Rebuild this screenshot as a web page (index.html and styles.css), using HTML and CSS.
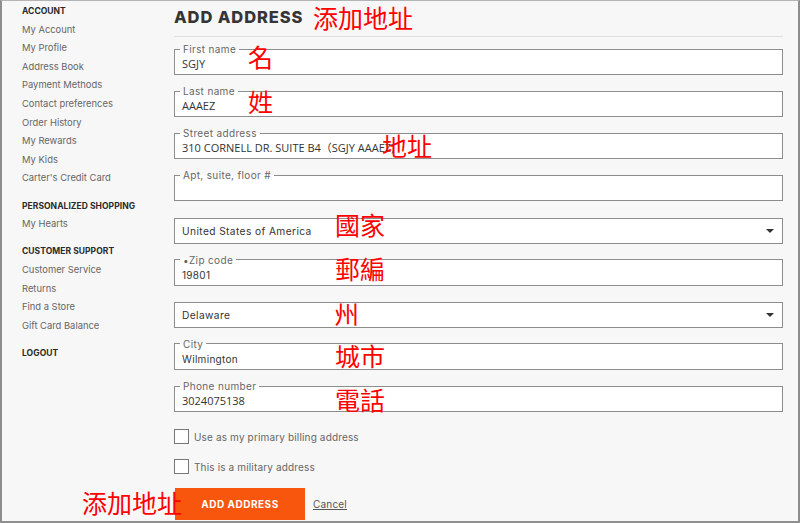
FILE: index.html
```html
<!DOCTYPE html>
<html lang="en">
<head>
<meta charset="utf-8">
<title>Add Address</title>
<link rel="stylesheet" href="styles.css">
</head>
<body>
<div class="frame">
  <aside class="sidebar">
    <nav class="nav-group">
      <h3 class="nav-title">ACCOUNT</h3>
      <a class="nav-link">My Account</a>
      <a class="nav-link">My Profile</a>
      <a class="nav-link">Address Book</a>
      <a class="nav-link">Payment Methods</a>
      <a class="nav-link">Contact preferences</a>
      <a class="nav-link">Order History</a>
      <a class="nav-link">My Rewards</a>
      <a class="nav-link">My Kids</a>
      <a class="nav-link">Carter's Credit Card</a>
    </nav>
    <nav class="nav-group">
      <h3 class="nav-title">PERSONALIZED SHOPPING</h3>
      <a class="nav-link">My Hearts</a>
    </nav>
    <nav class="nav-group">
      <h3 class="nav-title">CUSTOMER SUPPORT</h3>
      <a class="nav-link">Customer Service</a>
      <a class="nav-link">Returns</a>
      <a class="nav-link">Find a Store</a>
      <a class="nav-link">Gift Card Balance</a>
    </nav>
    <nav class="nav-group">
      <h3 class="nav-title">LOGOUT</h3>
    </nav>
  </aside>

  <main class="main">
    <h1 class="title">ADD ADDRESS</h1>
    <form class="form">
      <div class="fields">
        <fieldset class="field"><legend class="field-label">First name</legend><div class="value value-auto">SGJY</div></fieldset>
        <fieldset class="field"><legend class="field-label">Last name</legend><div class="value value-auto">AAAEZ</div></fieldset>
        <fieldset class="field"><legend class="field-label">Street address</legend><div class="value value-auto">310 CORNELL DR. SUITE B4（SGJY AAAEZ)</div></fieldset>
        <fieldset class="field"><legend class="field-label">Apt, suite, floor #</legend><div class="value">&nbsp;</div></fieldset>
        <div class="select-wrap"><div class="select"><span class="select-text">United States of America</span><span class="caret"></span></div></div>
        <fieldset class="field"><legend class="field-label">•Zip code</legend><div class="value">19801</div></fieldset>
        <div class="select-wrap"><div class="select"><span class="select-text">Delaware</span><span class="caret"></span></div></div>
        <fieldset class="field"><legend class="field-label">City</legend><div class="value">Wilmington</div></fieldset>
        <fieldset class="field"><legend class="field-label">Phone number</legend><div class="value value-auto">3024075138</div></fieldset>
      </div>
      <div class="checks">
        <label class="check"><span class="box"></span><span class="check-text">Use as my primary billing address</span></label>
        <label class="check"><span class="box"></span><span class="check-text">This is a military address</span></label>
      </div>
      <div class="actions">
        <button type="button" class="btn-primary">ADD ADDRESS</button>
        <a class="cancel">Cancel</a>
      </div>
    </form>
  </main>

  <span class="note note-title">添加地址</span>
  <span class="note note-first">名</span>
  <span class="note note-last">姓</span>
  <span class="note note-street">地址</span>
  <span class="note note-country">國家</span>
  <span class="note note-zip">郵編</span>
  <span class="note note-state">州</span>
  <span class="note note-city">城市</span>
  <span class="note note-phone">電話</span>
  <span class="note note-submit">添加地址</span>
</div>
</body>
</html>
```

FILE: styles.css
```css
* { box-sizing: border-box; }

html, body {
  margin: 0;
  padding: 0;
}

body {
  width: 800px;
  height: 523px;
  overflow: hidden;
  background: #f7f7f7;
  font-family: "Inter", "Noto Sans", sans-serif;
  color: #333;
}

.frame {
  position: relative;
  display: flex;
  width: 800px;
  height: 523px;
  overflow: hidden;
  background: #f7f7f7;
  border: 2px solid #8e8e8e;
  border-top: 1px solid #b4b4b4;
}

/* Sidebar */
.sidebar {
  flex: none;
  width: 172px;
  padding: 1px 0 0 20px;
}

.nav-group {
  display: flex;
  flex-direction: column;
  margin-top: 8.6px;
}

.nav-group:first-child { margin-top: 0; }

.nav-title {
  margin: 0;
  font-size: 8.5px;
  line-height: 18.6px;
  font-weight: 700;
  color: #2a2a2a;
  letter-spacing: 0.05px;
}

.nav-link {
  font-size: 9.4px;
  line-height: 18.6px;
  color: #666;
  text-decoration: none;
}

/* Main */
.main {
  flex: 1;
  padding-right: 15px;
}

.title {
  margin: 0;
  padding: 5px 0 8px;
  line-height: 22px;
  font-size: 16.5px;
  font-weight: 800;
  color: #353535;
  letter-spacing: 0.9px;
  border-bottom: 1px solid #dedede;
}

.form {
  display: flex;
  flex-direction: column;
  margin-top: 6px;
}

.fields {
  display: flex;
  flex-direction: column;
  gap: 10.125px;
}

.field {
  margin: 0;
  min-width: 0;
  padding: 0 7px;
  border: 1px solid #8d8d8d;
  background: #fff;
}

.field-label {
  margin-left: -2px;
  padding: 0 3px;
  font-size: 10px;
  line-height: 12px;
  letter-spacing: 0.35px;
  color: #666;
}

.value {
  padding: 2px 0 3px;
  font-size: 10px;
  line-height: 14px;
  letter-spacing: 0.3px;
  color: #333;
}

.value-auto {
  font-family: "Open Sans", "Noto Sans CJK TC", sans-serif;
  font-size: 11px;
  letter-spacing: 0;
  color: #333;
}

.select-wrap {
  padding-top: 6px;
}

.select {
  display: flex;
  align-items: center;
  justify-content: space-between;
  height: 26px;
  padding: 0 8px 0 7px;
  border: 1px solid #8d8d8d;
  background: #fff;
}

.select-text {
  font-size: 10.2px;
  letter-spacing: 0.4px;
  color: #333;
}

.caret {
  width: 0;
  height: 0;
  border-left: 4px solid transparent;
  border-right: 4px solid transparent;
  border-top: 4px solid #333;
}

/* Checkboxes */
.checks {
  display: flex;
  flex-direction: column;
  gap: 15px;
  margin-top: 17px;
}

.check {
  display: flex;
  align-items: center;
  gap: 5px;
  height: 15px;
}

.box {
  flex: none;
  width: 15px;
  height: 15px;
  border: 1px solid #777;
  background: #fff;
}

.check-text {
  font-size: 10px;
  letter-spacing: 0.15px;
  color: #666;
}

/* Actions */
.actions {
  display: flex;
  align-items: center;
  gap: 8px;
  margin-top: 14px;
  padding-left: 1px;
}

.btn-primary {
  width: 130px;
  height: 32px;
  margin: 0;
  padding: 0;
  border: 0;
  background: #f8560c;
  color: #fff;
  font-family: "Inter", "Noto Sans", sans-serif;
  font-size: 10px;
  font-weight: 700;
  letter-spacing: 0.5px;
}

.cancel {
  font-size: 10px;
  letter-spacing: 0.2px;
  color: #555;
  text-decoration: underline;
}

/* Red annotations */
.note {
  position: absolute;
  z-index: 2;
  font-family: "Noto Sans CJK TC", "Noto Sans CJK SC", sans-serif;
  font-size: 25px;
  line-height: 25px;
  color: #ff0000;
  white-space: nowrap;
}

.note-title   { left: 311px; top: 4px; }
.note-first   { left: 246px; top: 43px; }
.note-last    { left: 246px; top: 87.5px; }
.note-street  { left: 380px; top: 131.5px; }
.note-country { left: 333px; top: 210.5px; }
.note-zip     { left: 333px; top: 254.8px; }
.note-state   { left: 332px; top: 299.5px; }
.note-city    { left: 333px; top: 341.8px; }
.note-phone   { left: 333px; top: 386.2px; }
.note-submit  { left: 80px;  top: 488.8px; }
```
